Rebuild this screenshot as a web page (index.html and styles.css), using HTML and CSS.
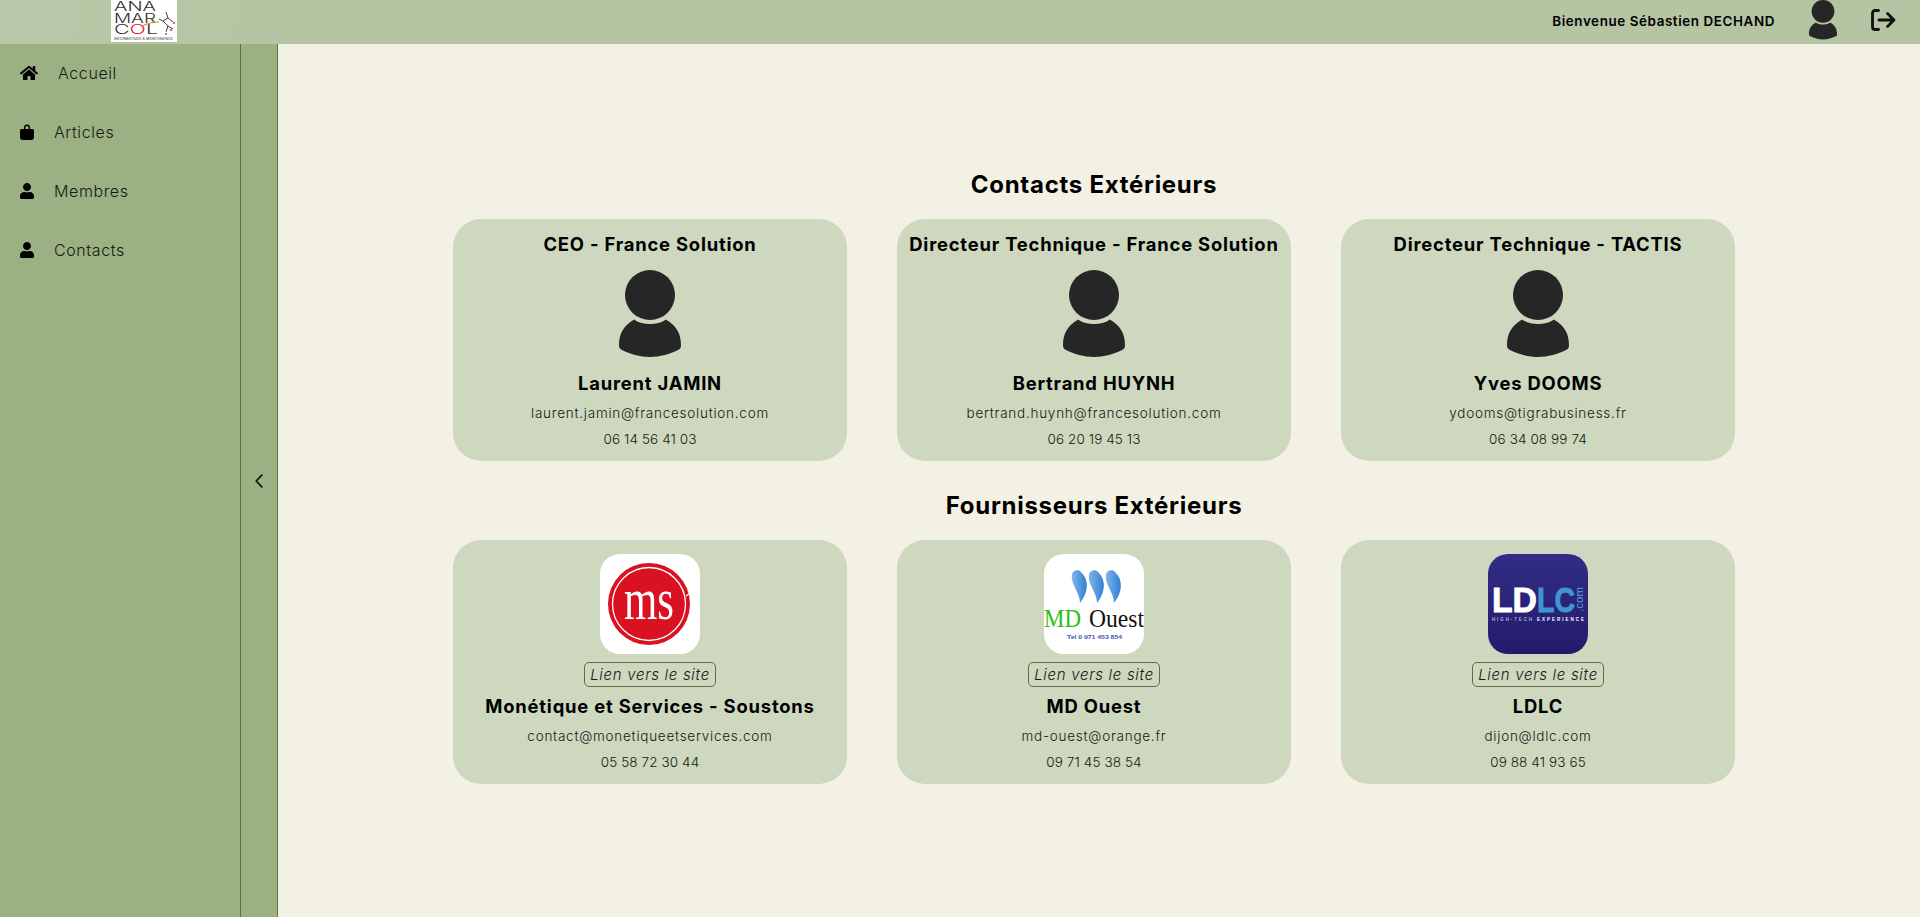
FILE: index.html
```html
<!DOCTYPE html>
<html lang="fr">
<head>
<meta charset="utf-8">
<title>Contacts</title>
<link rel="stylesheet" href="styles.css">
</head>
<body>
<svg class="defs" aria-hidden="true">
  <symbol id="person" viewBox="0 0 62 88">
    <circle cx="31" cy="25" r="25"/>
    <path d="M15 49.500C20 53 25 54 31 54s11-1 16-4.500C56 55 62 62 62 75c0 3-1 4-3 5-8 4-18 7-28 7S11 84 3 80c-2-1-3-2-3-5 0-13 6-20 15-25.500z"/>
  </symbol>
  <symbol id="fa-user" viewBox="0 0 448 512">
    <path d="M224 256c70.700 0 128-57.300 128-128S294.700 0 224 0 96 57.300 96 128s57.300 128 128 128zm89.600 32h-16.700c-22.200 10.200-46.900 16-72.900 16s-50.600-5.800-72.900-16h-16.700C60.200 288 0 348.200 0 422.400V464c0 26.500 21.500 48 48 48h352c26.500 0 48-21.500 48-48v-41.600c0-74.200-60.200-134.400-134.400-134.400z"/>
  </symbol>
</svg>

<header class="topbar">
  <div class="brand">
    <svg class="brand-logo" viewBox="0 0 66 42" role="img" aria-label="ANA MAR COL">
      <rect width="66" height="42" fill="#fff"/>
      <g class="brand-letters">
        <text x="3" y="11" textLength="42" lengthAdjust="spacingAndGlyphs">ANA</text>
        <text x="3" y="23" textLength="42" lengthAdjust="spacingAndGlyphs">MAR</text>
        <text x="3" y="34" textLength="44" lengthAdjust="spacingAndGlyphs">C<tspan fill="#d9263c">O</tspan>L</text>
      </g>
      <path d="M30 27c6-4 12-5 18-5" fill="none" stroke="#f08a24" stroke-width="1.200"/>
      <path d="M55 12l2 6-5 3 5 5-2 6M57 18l5 4M52 21l-4-2M57 26l5 3" fill="none" stroke="#444" stroke-width="1"/>
      <circle cx="63" cy="23" r="1" fill="#a13bb0"/><circle cx="60" cy="30" r="1" fill="#d9263c"/><circle cx="55" cy="34" r="1" fill="#3a78c8"/>
      <text class="brand-small" x="3" y="39.500" textLength="59" lengthAdjust="spacingAndGlyphs">INFORMATIQUE &amp; MAINTENANCE</text>
    </svg>
  </div>
  <div class="user-area">
    <span class="welcome">Bienvenue Sébastien DECHAND</span>
    <svg class="top-avatar"><use href="#person"/></svg>
    <svg class="logout" viewBox="0 0 25 22" fill="none" stroke="#111" stroke-width="2.800" stroke-linecap="round" stroke-linejoin="round" aria-label="Déconnexion">
      <path d="M7.500 1.500H4A2.500 2.500 0 0 0 1.500 4v14A2.500 2.500 0 0 0 4 20.500h3.500"/>
      <path d="M8 11h15M16.500 4.500 23 11l-6.500 6.500"/>
    </svg>
  </div>
</header>

<div class="layout">
  <nav class="sidebar">
    <a class="nav-item" href="#">
      <svg class="nav-icon nav-icon-home" viewBox="0 0 576 512"><path d="M280.370 148.260L96 300.110V464a16 16 0 0 0 16 16l112.060-.29a16 16 0 0 0 15.920-16V368a16 16 0 0 1 16-16h64a16 16 0 0 1 16 16v95.640a16 16 0 0 0 16 16.050L464 480a16 16 0 0 0 16-16V300L295.670 148.260a12.190 12.190 0 0 0-15.300 0zM571.600 251.470L488 182.560V44.050a12 12 0 0 0-12-12h-56a12 12 0 0 0-12 12v72.610L318.470 43a48 48 0 0 0-61 0L4.340 251.470a12 12 0 0 0-1.600 16.900l25.500 31A12 12 0 0 0 45.150 301l235.220-193.740a12.190 12.190 0 0 1 15.300 0L530.900 301a12 12 0 0 0 16.900-1.600l25.500-31a12 12 0 0 0-1.700-16.930z"/></svg>
      <span>Accueil</span>
    </a>
    <a class="nav-item" href="#">
      <svg class="nav-icon" viewBox="0 0 14 16"><path d="M4 5V3.600a3 3 0 0 1 6 0V5h2.500a1.500 1.500 0 0 1 1.500 1.500V13a3 3 0 0 1-3 3H3a3 3 0 0 1-3-3V6.500A1.500 1.500 0 0 1 1.500 5zm1.400 0h3.200V3.600a1.600 1.600 0 0 0-3.200 0z" fill-rule="evenodd"/></svg>
      <span>Articles</span>
    </a>
    <a class="nav-item" href="#">
      <svg class="nav-icon"><use href="#fa-user"/></svg>
      <span>Membres</span>
    </a>
    <a class="nav-item" href="#">
      <svg class="nav-icon"><use href="#fa-user"/></svg>
      <span>Contacts</span>
    </a>
  </nav>
  <div class="collapse-handle">
    <svg class="chevron" viewBox="0 0 8 14" fill="none" stroke="#111" stroke-width="1.700" stroke-linecap="round" stroke-linejoin="round"><path d="M6.800 1.200 1.200 7l5.600 5.800"/></svg>
  </div>

  <main class="content">
    <h2 class="section-title">Contacts Extérieurs</h2>
    <section class="card-grid">
      <article class="card">
        <h3 class="card-role">CEO - France Solution</h3>
        <svg class="avatar"><use href="#person"/></svg>
        <h3 class="card-name">Laurent JAMIN</h3>
        <p class="card-email">laurent.jamin@francesolution.com</p>
        <p class="card-phone">06 14 56 41 03</p>
      </article>
      <article class="card">
        <h3 class="card-role">Directeur Technique - France Solution</h3>
        <svg class="avatar"><use href="#person"/></svg>
        <h3 class="card-name">Bertrand HUYNH</h3>
        <p class="card-email">bertrand.huynh@francesolution.com</p>
        <p class="card-phone">06 20 19 45 13</p>
      </article>
      <article class="card">
        <h3 class="card-role">Directeur Technique - TACTIS</h3>
        <svg class="avatar"><use href="#person"/></svg>
        <h3 class="card-name">Yves DOOMS</h3>
        <p class="card-email">ydooms@tigrabusiness.fr</p>
        <p class="card-phone">06 34 08 99 74</p>
      </article>
    </section>

    <h2 class="section-title section-title-next">Fournisseurs Extérieurs</h2>
    <section class="card-grid">
      <article class="card">
        <svg class="supplier-logo" viewBox="0 0 100 100" role="img" aria-label="Monétique et Services">
          <rect width="100" height="100" fill="#fff"/>
          <circle cx="49" cy="50" r="41" fill="#d91120"/>
          <circle cx="49" cy="50" r="36.500" fill="none" stroke="#fff" stroke-width="1.300"/>
          <path d="M86 42 92 38M70 88l10-6" stroke="#fff" stroke-width="1.500"/>
          <text class="ms-mark" x="24" y="65" textLength="50" lengthAdjust="spacingAndGlyphs">ms</text>
        </svg>
        <a class="site-link" href="#">Lien vers le site</a>
        <h3 class="card-name card-name-tight">Monétique et Services - Soustons</h3>
        <p class="card-email">contact@monetiqueetservices.com</p>
        <p class="card-phone">05 58 72 30 44</p>
      </article>
      <article class="card">
        <svg class="supplier-logo" viewBox="0 0 100 100" role="img" aria-label="MD Ouest">
          <defs><linearGradient id="drop" x1="0" y1="0" x2="1" y2="0"><stop offset="0" stop-color="#7fb6ea"/><stop offset="1" stop-color="#2f80d0"/></linearGradient></defs>
          <rect width="100" height="100" fill="#fff"/>
          <g fill="url(#drop)">
            <path d="M28 20C29 16 35 15 37 18 45 25 45 38 36 49 36 38 26 30 28 20z"/>
            <path d="M45 20C46 16 52 15 54 18 62 25 62 38 53 49 53 38 43 30 45 20z"/>
            <path d="M62 20C63 16 69 15 71 18 79 25 79 38 70 49 70 38 60 30 62 20z"/>
          </g>
          <text class="md-word md-green" x="0" y="73" textLength="37" lengthAdjust="spacingAndGlyphs">MD</text>
          <text class="md-word" x="45" y="73" textLength="55" lengthAdjust="spacingAndGlyphs">Ouest</text>
          <text class="md-tel" x="23" y="85" textLength="55" lengthAdjust="spacingAndGlyphs">Tel 0 971 453 854</text>
        </svg>
        <a class="site-link" href="#">Lien vers le site</a>
        <h3 class="card-name card-name-tight">MD Ouest</h3>
        <p class="card-email">md-ouest@orange.fr</p>
        <p class="card-phone">09 71 45 38 54</p>
      </article>
      <article class="card">
        <svg class="supplier-logo" viewBox="0 0 100 100" role="img" aria-label="LDLC">
          <defs><linearGradient id="ldlc" x1="0" y1="0" x2="0" y2="1"><stop offset="0" stop-color="#322c85"/><stop offset="1" stop-color="#221b6d"/></linearGradient></defs>
          <rect width="100" height="100" fill="url(#ldlc)"/>
          <text class="ldlc-word ldlc-white" x="4" y="58" textLength="45" lengthAdjust="spacingAndGlyphs">LD</text>
          <text class="ldlc-word ldlc-blue" x="49" y="58" textLength="38" lengthAdjust="spacingAndGlyphs">LC</text>
          <text class="ldlc-com" transform="translate(95 58) rotate(-90)" textLength="25" lengthAdjust="spacingAndGlyphs">.com</text>
          <text class="ldlc-sub" x="4" y="67" textLength="40" lengthAdjust="spacing" fill="#a9b0da">HIGH-TECH</text>
          <text class="ldlc-sub" x="49" y="67" textLength="47" lengthAdjust="spacing" fill="#fff">EXPERIENCE</text>
        </svg>
        <a class="site-link" href="#">Lien vers le site</a>
        <h3 class="card-name card-name-tight">LDLC</h3>
        <p class="card-email">dijon@ldlc.com</p>
        <p class="card-phone">09 88 41 93 65</p>
      </article>
    </section>
  </main>
</div>
</body>
</html>
```

FILE: styles.css
```css
* { box-sizing: border-box; }

html, body { height: 100%; }

body {
  margin: 0;
  display: flex;
  flex-direction: column;
  overflow: hidden;
  background: #f3f1e3;
  color: #111;
  font-family: Inter, "Noto Sans", sans-serif;
}

.defs { display: none; }

.topbar {
  flex: 0 0 44px;
  display: flex;
  justify-content: space-between;
  background: linear-gradient(100deg, #bac8a9 0, #b5c4a2 14%);
}

.brand { padding-left: 111px; }

.brand-logo { display: block; width: 66px; height: 42px; }

.brand-letters { font: 300 12.500px Inter, sans-serif; fill: #333; }

.brand-small { font: 500 3px Inter, sans-serif; fill: #555; }

.user-area {
  display: flex;
  align-items: flex-start;
  padding-right: 24px;
}

.welcome {
  margin: 13px 33px 0 0;
  font-size: 13.400px;
  line-height: 17px;
  font-weight: 600;
  letter-spacing: 0.6px;
  color: #000;
}

.top-avatar { width: 30px; height: 40px; fill: #262626; }

.logout { width: 25px; height: 22px; margin: 9px 0 0 33px; }

.layout { flex: 1; display: flex; min-height: 0; }

.sidebar {
  flex: 0 0 240px;
  background: #9bb083;
}

.nav-item {
  display: flex;
  align-items: center;
  gap: 20px;
  height: 59px;
  padding: 0 0 2px 20px;
  color: #141a11;
  font-size: 16px;
  font-weight: 350;
  letter-spacing: 0.6px;
  text-decoration: none;
}

.nav-icon { width: 14px; height: 16px; flex: none; fill: #000; }

.nav-icon-home { width: 18px; }

.collapse-handle {
  flex: 0 0 38px;
  display: flex;
  align-items: center;
  justify-content: center;
  background: #9bb083;
  border-left: 1px solid #5b6e47;
  border-right: 1px solid #5b6e47;
}

.chevron { width: 8px; height: 14px; margin-left: -1px; }

.content {
  flex: 1;
  padding: 125px 185px 0 175px;
}

.section-title {
  margin: 0 0 20px;
  padding-top: 1px;
  font-size: 24px;
  line-height: 29px;
  font-weight: 700;
  letter-spacing: 0.72px;
  text-align: center;
  color: #000;
}

.section-title-next { margin-top: 29px; }

.card-grid {
  display: grid;
  grid-template-columns: repeat(3, 394px);
  gap: 50px;
}

.card {
  display: flex;
  flex-direction: column;
  align-items: center;
  padding: 14px 0 13px;
  background: #cdd8bf;
  border-radius: 28px;
  text-align: center;
}

.card-role, .card-name {
  margin: 0;
  font-size: 18.400px;
  line-height: 22px;
  font-weight: 700;
  letter-spacing: 0.8px;
  color: #000;
  white-space: nowrap;
}

.avatar {
  width: 62px;
  height: 88px;
  margin-top: 15px;
  fill: #262626;
}

.card-name { margin-top: 14px; }

.card-name-tight { margin-top: 8px; }

.card-email, .card-phone {
  font-size: 13.500px;
  line-height: 18px;
  font-weight: 350;
  color: #141a11;
}

.card-email {
  margin: 10px 0 0;
  letter-spacing: 0.75px;
}

.card-phone {
  margin: 8px 0 0;
  letter-spacing: 0.1px;
}

.supplier-logo {
  display: block;
  width: 100px;
  height: 100px;
  border-radius: 20px;
}

.site-link {
  margin-top: 8px;
  padding: 0 5px;
  border: 1px solid #5b6e47;
  border-radius: 5px;
  font-size: 15px;
  line-height: 23px;
  font-style: italic;
  font-weight: 350;
  letter-spacing: 0.7px;
  color: #141a11;
  text-decoration: none;
}

.ms-mark { font: 400 60px "Liberation Serif", serif; fill: #fff; }

.md-word { font: 400 25px "Liberation Serif", serif; fill: #111; }

.md-green { fill: #2ebf12; }

.md-tel { font: 700 6px "Liberation Sans", sans-serif; fill: #3f4fc0; }

.ldlc-word { font: 700 35px "Liberation Sans", sans-serif; stroke-width: 0.9px; }

.ldlc-white { fill: #fff; stroke: #fff; }

.ldlc-blue { fill: #3f94d2; stroke: #3f94d2; }

.ldlc-com { font: 400 11px "Liberation Sans", sans-serif; fill: #4ea3e0; }

.ldlc-sub { font: 700 4.500px "Liberation Sans", sans-serif; }
```
